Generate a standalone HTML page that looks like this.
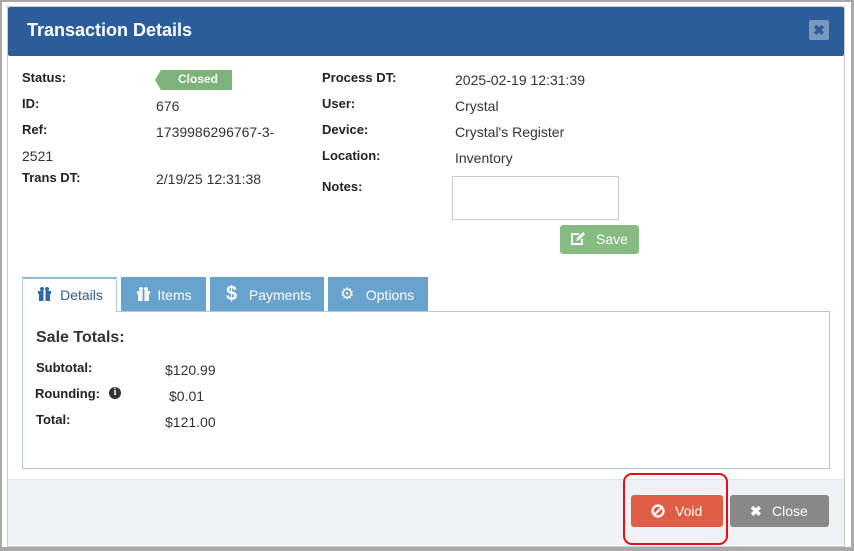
<!DOCTYPE html>
<html><head><meta charset="utf-8"><style>
*{margin:0;padding:0;box-sizing:border-box}
body{width:854px;height:551px;background:#fff;font-family:"Liberation Sans",sans-serif;position:relative;overflow:hidden;color:#333}
.a{position:absolute}
.l{font-weight:bold;font-size:13px;color:#222}
.v{font-size:14px;color:#333}
.tab{position:absolute;top:277px;height:34px;background:#67a3cd;color:#fff;font-size:14px;line-height:36px;text-align:center}
</style></head><body>
<div class="a" style="left:0;top:0;width:854px;height:551px;border:2px solid #a9a9a9;border-right-width:3px;border-bottom-width:4px"></div>
<div class="a" style="left:7px;top:6px;width:838px;height:541px;border:1px solid #ccc"></div>
<div class="a" style="left:8px;top:7px;width:836px;height:49px;background:#2a5d9a;border-radius:2px"></div>
<div class="a" style="left:27px;top:20px;font-size:18px;font-weight:bold;color:#fff">Transaction Details</div>
<div class="a" style="left:809px;top:20px;width:20px;height:20px;background:#7b97bd;border-radius:2px;color:#2a5d9a;font-size:14px;font-weight:bold;text-align:center;line-height:20px">✖</div>

<div class="a l" style="left:22px;top:70px">Status:</div>
<div class="a" style="left:155px;top:70px;width:77px;height:20px;background:#7db27a;clip-path:polygon(6px 0,100% 0,100% 100%,6px 100%,0 50%)"></div>
<div class="a" style="left:178px;top:72px;font-size:12px;font-weight:bold;color:#fff">Closed</div>
<div class="a l" style="left:22px;top:96px">ID:</div>
<div class="a v" style="left:156px;top:98px">676</div>
<div class="a l" style="left:22px;top:122px">Ref:</div>
<div class="a v" style="left:156px;top:124px">1739986296767-3-</div>
<div class="a v" style="left:22px;top:148px">2521</div>
<div class="a l" style="left:22px;top:170px">Trans DT:</div>
<div class="a v" style="left:156px;top:171px">2/19/25 12:31:38</div>

<div class="a l" style="left:322px;top:70px">Process DT:</div>
<div class="a v" style="left:455px;top:72px">2025-02-19 12:31:39</div>
<div class="a l" style="left:322px;top:96px">User:</div>
<div class="a v" style="left:455px;top:98px">Crystal</div>
<div class="a l" style="left:322px;top:122px">Device:</div>
<div class="a v" style="left:455px;top:124px">Crystal's Register</div>
<div class="a l" style="left:322px;top:148px">Location:</div>
<div class="a v" style="left:455px;top:150px">Inventory</div>
<div class="a l" style="left:322px;top:179px">Notes:</div>
<div class="a" style="left:452px;top:176px;width:167px;height:44px;border:1px solid #ccc"></div>
<div class="a" style="left:560px;top:225px;width:79px;height:29px;background:#86bb81;border-radius:3px;color:#fff;font-size:14px;line-height:29px;padding-left:36px">Save</div>
<svg class="a" style="left:570px;top:232px" width="16" height="14" viewBox="0 0 16 14"><path d="M9 2H2v10h10V7" fill="none" stroke="#fff" stroke-width="2"/><path d="M6 9l1-3 6-6 2 2-6 6z" fill="#fff"/></svg>

<div class="a" style="left:22px;top:311px;width:808px;height:158px;border:1px solid #aac8df"></div>
<div class="tab" style="left:22px;width:95px;height:35px;background:#fff;color:#2a5d9a;border:1px solid #aac8df;border-bottom:none;border-top:2px solid #8ebbdc;line-height:32px;padding-left:24px">Details</div>
<svg class="a" style="left:37px;top:287px" width="15" height="14" viewBox="0 0 15 14"><rect x="1" y="4" width="13" height="3" fill="#2a6aa8"/><rect x="2" y="7" width="11" height="7" fill="#2a6aa8"/><rect x="6.5" y="4" width="2" height="10" fill="#fff"/><circle cx="5" cy="2" r="2" fill="#2a6aa8"/><circle cx="10" cy="2" r="2" fill="#2a6aa8"/></svg>
<div class="tab" style="left:121px;width:85px;padding-left:22px">Items</div>
<svg class="a" style="left:136px;top:287px" width="15" height="14" viewBox="0 0 15 14"><rect x="1" y="4" width="13" height="3" fill="#fff"/><rect x="2" y="7" width="11" height="7" fill="#fff"/><rect x="6.5" y="4" width="2" height="10" fill="#67a3cd"/><circle cx="5" cy="2" r="2" fill="#fff"/><circle cx="10" cy="2" r="2" fill="#fff"/></svg>
<div class="tab" style="left:210px;width:114px;padding-left:26px">Payments</div>
<div class="a" style="left:226px;top:283px;color:#fff;font-size:20px;font-weight:bold">$</div>
<div class="tab" style="left:328px;width:100px;padding-left:24px">Options</div>
<div class="a" style="left:340px;top:284px;color:#fff;font-size:16px">⚙</div>

<div class="a" style="left:36px;top:329px;font-size:16px;font-weight:bold;color:#333">Sale Totals:</div>
<div class="a l" style="left:36px;top:360px">Subtotal:</div>
<div class="a v" style="left:165px;top:362px">$120.99</div>
<div class="a l" style="left:35px;top:386px">Rounding:</div>
<div class="a" style="left:109px;top:387px;width:12px;height:12px;border-radius:50%;background:#333;color:#fff;font-size:10px;font-weight:bold;text-align:center;line-height:12px;font-family:'Liberation Serif',serif">i</div>
<div class="a v" style="left:169px;top:388px">$0.01</div>
<div class="a l" style="left:36px;top:412px">Total:</div>
<div class="a v" style="left:165px;top:414px">$121.00</div>

<div class="a" style="left:8px;top:479px;width:836px;height:66px;background:#eef1f6;border-top:1px solid #e0e4ea"></div>
<div class="a" style="left:631px;top:495px;width:92px;height:32px;background:#e05d45;border-radius:3px;color:#fff;font-size:14px;line-height:32px;padding-left:44px">Void</div>
<svg class="a" style="left:651px;top:504px" width="14" height="14" viewBox="0 0 14 14"><circle cx="7" cy="7" r="5.5" fill="none" stroke="#fff" stroke-width="2.2"/><path d="M3.5 10.5l7-7" stroke="#fff" stroke-width="2.2"/></svg>
<div class="a" style="left:730px;top:495px;width:99px;height:32px;background:#888;border-radius:3px;color:#fff;font-size:14px;line-height:32px;padding-left:42px">Close</div>
<div class="a" style="left:750px;top:495px;color:#fff;font-size:14px;line-height:32px;font-weight:bold">✖</div>
<div class="a" style="left:623px;top:473px;width:105px;height:72px;border:2px solid #e0101a;border-radius:9px"></div>
</body></html>
